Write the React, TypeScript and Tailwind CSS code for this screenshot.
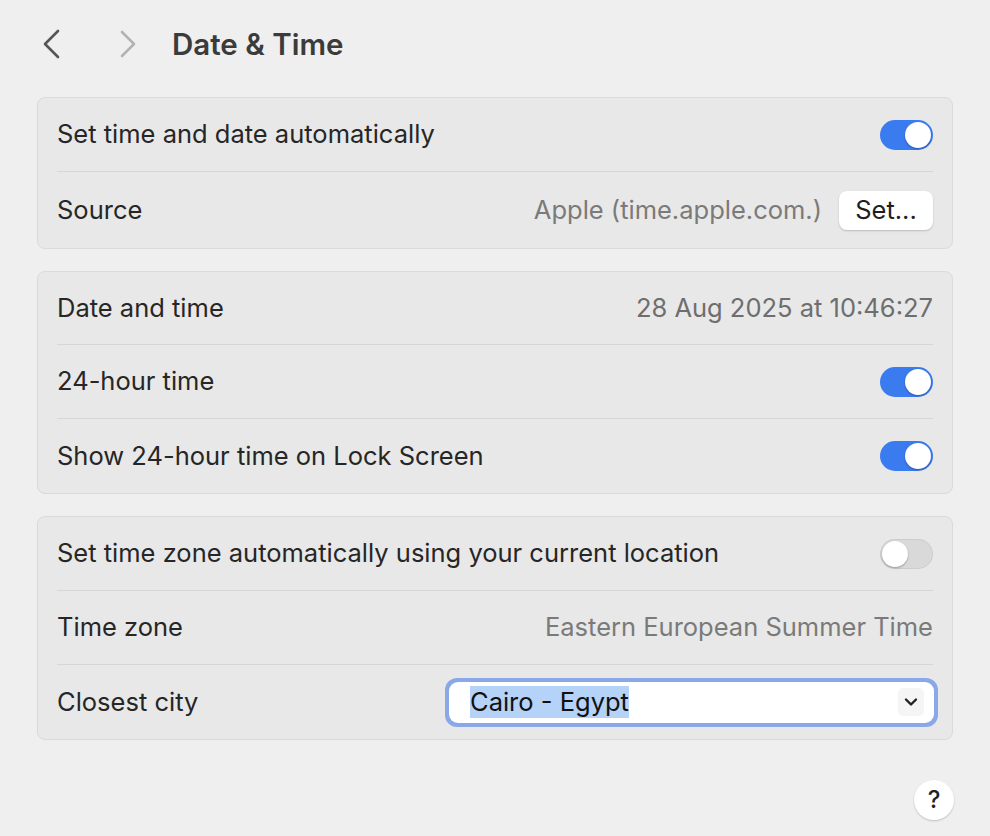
import React from "react";

const Toggle = ({ on }: { on: boolean }) => (
  <div
    className={`relative w-[53px] h-[30px] rounded-full ${on ? "bg-[#3a7bf0]" : "bg-[#d9d9d9] shadow-[inset_0_0_0_1px_rgba(0,0,0,0.06)]"}`}
  >
    <div
      className={`absolute top-[2px] w-[26px] h-[26px] rounded-full bg-white shadow-[0_1px_2px_rgba(0,0,0,0.3)] ${on ? "left-[25px]" : "left-[2px]"}`}
    />
  </div>
);

const Row = ({ label, children, last, h }: { label: string; children?: React.ReactNode; last?: boolean; h: string }) => (
  <div className="flex flex-col pl-[19px] pr-[19px]">
    <div className={`flex items-center justify-between ${h}`}>
      <span className="text-[25.5px] text-[#262626]">{label}</span>
      <div className="flex items-center">{children}</div>
    </div>
    {!last && <div className="h-[1px] bg-[#d6d6d6]" />}
  </div>
);

const Card = ({ children }: { children: React.ReactNode }) => (
  <div className="rounded-[8px] border border-[#dadada] bg-[#e8e8e8]">{children}</div>
);

export default function App() {
  return (
    <div
      className="w-[990px] h-[836px] bg-[#efefef] relative"
      style={{ fontFamily: "Inter, 'Noto Sans', sans-serif" }}
    >
      <div className="flex items-center h-[88px] pl-[40px]">
        <svg width="24" height="30" viewBox="0 0 24 30" className="mr-[52px]">
          <path d="M18 2 L5 15 L18 28" fill="none" stroke="#555" strokeWidth="2.6" strokeLinecap="round" strokeLinejoin="round" />
        </svg>
        <svg width="24" height="30" viewBox="0 0 24 30" className="mr-[32px]">
          <path d="M6 3 L18 15 L6 27" fill="none" stroke="#b3b3b3" strokeWidth="2.6" strokeLinecap="round" strokeLinejoin="round" />
        </svg>
        <span className="text-[29.5px] font-semibold text-[#3b3b3b]">Date &amp; Time</span>
      </div>

      <div className="flex flex-col gap-[22px] px-[37px] mt-[9px]">
        <Card>
          <Row label="Set time and date automatically" h="h-[73px]">
            <Toggle on />
          </Row>
          <Row label="Source" last h="h-[76px]">
            <span className="text-[25.5px] text-[#7a7a7a] mr-[17px]">Apple (time.apple.com.)</span>
            <div className="h-[39px] w-[94px] rounded-[8px] bg-white shadow-[0_1px_2px_rgba(0,0,0,0.2)] flex items-center justify-center text-[25.5px] text-[#1f1f1f]">
              Set...
            </div>
          </Row>
        </Card>

        <Card>
          <Row label="Date and time" h="h-[72px]">
            <span className="text-[25.5px] text-[#6e6e6e]">28 Aug 2025 at 10:46:27</span>
          </Row>
          <Row label="24-hour time" h="h-[73px]">
            <Toggle on />
          </Row>
          <Row label="Show 24-hour time on Lock Screen" last h="h-[74px]">
            <Toggle on />
          </Row>
        </Card>

        <Card>
          <Row label="Set time zone automatically using your current location" h="h-[73px]">
            <Toggle on={false} />
          </Row>
          <Row label="Time zone" h="h-[73px]">
            <span className="text-[25.5px] text-[#7a7a7a]">Eastern European Summer Time</span>
          </Row>
          <Row label="Closest city" last h="h-[74px]">
            <div className="mr-[-5px] w-[493px] h-[49px] rounded-[12px] bg-[#8aa8e8] p-[4px]">
              <div className="w-full h-full rounded-[9px] bg-white flex items-center justify-between pl-[21px] pr-[10px]">
                <span className="text-[25.5px] text-[#111] bg-[#b5d2f8] leading-[32px]">Cairo - Egypt</span>
                <div className="w-[26px] h-[28px] rounded-[5px] bg-[#f5f5f5] flex items-center justify-center">
                  <svg width="14" height="10" viewBox="0 0 14 10">
                    <path d="M2 2.5 L7 7.5 L12 2.5" fill="none" stroke="#222" strokeWidth="2.4" strokeLinecap="round" strokeLinejoin="round" />
                  </svg>
                </div>
              </div>
            </div>
          </Row>
        </Card>
      </div>

      <div className="absolute left-[914px] top-[780px] w-[40px] h-[40px] rounded-full bg-white shadow-[0_1px_2px_rgba(0,0,0,0.2)] flex items-center justify-center text-[24px] font-medium text-[#222]">
        ?
      </div>
    </div>
  );
}
